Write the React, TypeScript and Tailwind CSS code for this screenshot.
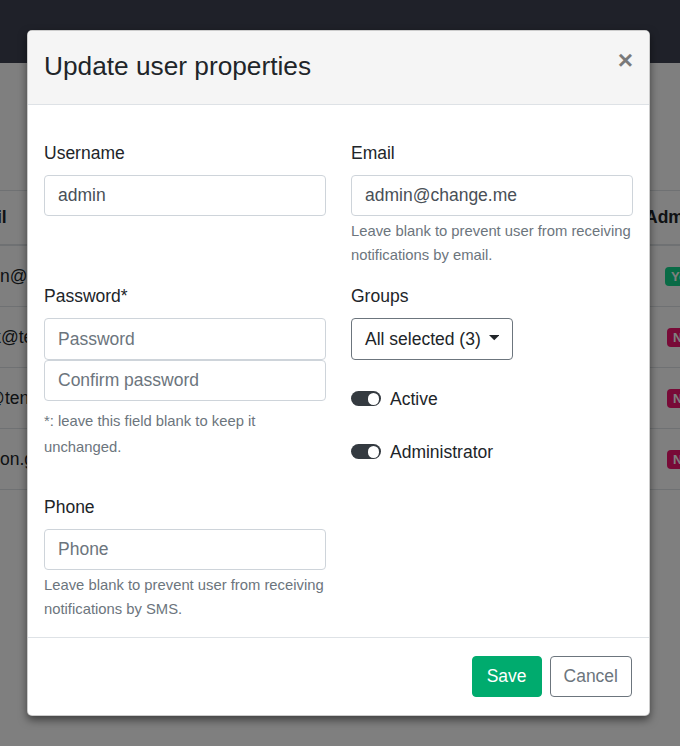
import React from "react"

const rows = [
  { email: "admin@change.me", admin: true },
  { email: "mark@test.com", admin: false },
  { email: "jack@tenant.io", admin: false },
  { email: "benson.grant@mail.com", admin: false },
]

function Badge({ yes }: { yes: boolean }) {
  return yes ? (
    <span className="ml-[17px] rounded-[4px] bg-[#12d68c] px-[6px] py-[3px] text-[13px] font-bold leading-none text-white">
      Yes
    </span>
  ) : (
    <span className="ml-[19px] rounded-[4px] bg-[#f0146e] px-[6px] py-[3px] text-[13px] font-bold leading-none text-white">
      No
    </span>
  )
}

function UsersTable() {
  return (
    <div className="pt-[127px] text-[17.5px]">
      <div className="flex h-[56px] items-center border-t border-b-2 border-[#dee2e6] font-bold">
        <div className="-ml-[40px] w-[685px] shrink-0">Email</div>
        <div>Admin</div>
      </div>
      {rows.map((r, i) => (
        <div key={r.email} className="flex h-[61px] items-center border-b border-[#dee2e6]">
          <div className={i === 2 ? "-ml-[44px] w-[692px] shrink-0" : "-ml-[38px] w-[686px] shrink-0"}>{r.email}</div>
          <Badge yes={r.admin} />
        </div>
      ))}
    </div>
  )
}

function Field({ label, value, placeholder }: { label?: string; value?: string; placeholder?: string }) {
  return (
    <input
      aria-label={label}
      defaultValue={value}
      placeholder={placeholder}
      className="block h-[41.4px] w-full rounded-[4px] border border-[#ced4da] bg-white px-[13px] text-[17.5px] text-[#495057] outline-none placeholder:text-[#6c757d]"
    />
  )
}

function Label({ children }: { children: React.ReactNode }) {
  return <label className="mb-[8.75px] block leading-[26.25px]">{children}</label>
}

function Switch({ label }: { label: string }) {
  return (
    <div className="flex h-[26.25px] items-center">
      <span className="flex h-[15px] w-[30px] items-center justify-end rounded-full bg-[#343a40] px-[2px]">
        <span className="h-[11.5px] w-[11.5px] rounded-full bg-white" />
      </span>
      <span className="ml-[9px]">{label}</span>
    </div>
  )
}

export default function App() {
  return (
    <div className="relative h-[746px] w-[680px] overflow-hidden bg-white font-['Liberation_Sans',Arial,sans-serif] text-[#212529]">
      <div className="h-[63px] bg-[#3e4252]" />
      <UsersTable />

      <div className="absolute inset-0 bg-black/50" />

      <div className="absolute left-[27px] top-[30px] w-[623px] overflow-hidden rounded-[5px] border border-black/20 bg-white text-[17.5px] shadow-[0_4px_8px_rgba(0,0,0,0.5)]">
        <div className="flex items-start border-b border-[#dee2e6] bg-[#f5f5f5] p-4">
          <h4 className="-mt-px mb-px text-[26.25px] leading-[41.4px]">Update user properties</h4>
          <button className="-m-4 ml-auto p-4 text-[26.25px] font-bold leading-none text-black opacity-50">×</button>
        </div>

        <div className="px-4 pb-[15.7px] pt-[34.6px]">
          <div className="grid grid-cols-2 gap-x-[25px] gap-y-4">
            <div>
              <Label>Username</Label>
              <Field label="Username" value="admin" />
            </div>
            <div>
              <Label>Email</Label>
              <Field label="Email" value="admin@change.me" />
              <small className="mt-[3px] block text-[14.8px] leading-6 text-[#6c757d]">
                Leave blank to prevent user from receiving notifications by email.
              </small>
            </div>

            <div>
              <Label>Password*</Label>
              <Field label="Password" placeholder="Password" />
              <Field label="Confirm password" placeholder="Confirm password" />
              <small className="mt-[6.7px] block text-[14.8px] leading-[26.25px] text-[#6c757d]">
                *: leave this field blank to keep it unchanged.
              </small>
            </div>
            <div className="pb-[12.8px]">
              <Label>Groups</Label>
              <button className="flex h-[41.4px] items-center rounded-[4px] border border-[#6c757d] px-[13px] text-[#212529]">
                All selected (3)
                <svg className="ml-[8px] mt-[-2px]" width="10.5" height="5.25" viewBox="0 0 10.5 5.25">
                  <polygon points="0,0 10.5,0 5.25,5.25" fill="#212529" />
                </svg>
              </button>
              <div className="mt-[26px]">
                <Switch label="Active" />
              </div>
              <div className="mt-[26.75px]">
                <Switch label="Administrator" />
              </div>
            </div>

            <div>
              <Label>Phone</Label>
              <Field label="Phone" placeholder="Phone" />
              <small className="mt-[3px] block text-[14.8px] leading-6 text-[#6c757d]">
                Leave blank to prevent user from receiving notifications by SMS.
              </small>
            </div>
            <div />
          </div>
        </div>

        <div className="flex justify-end gap-2 border-t border-[#dee2e6] py-[18px] pr-[17px]">
          <button className="h-[41px] rounded-[4px] border border-[#00ab6e] bg-[#00ab6e] px-[14px] text-white">Save</button>
          <button className="h-[41px] rounded-[4px] border border-[#6c757d] bg-white px-[13px] text-[#6c757d]">Cancel</button>
        </div>
      </div>
    </div>
  )
}
